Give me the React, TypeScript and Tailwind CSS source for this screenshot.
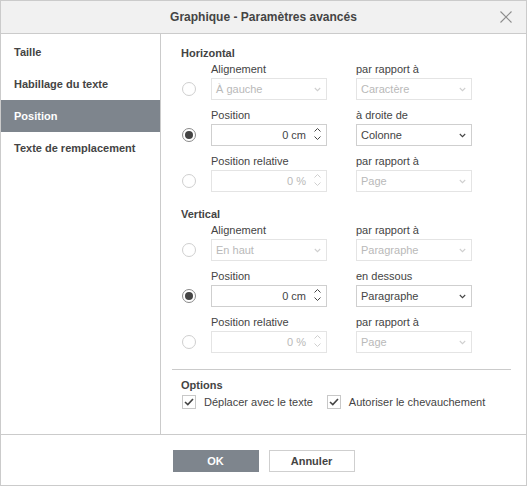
import React from 'react';

const FONT = 'font-["Liberation_Sans",Arial,Helvetica,sans-serif]';

const Chevron: React.FC<{ disabled?: boolean }> = ({ disabled }) => (
    <svg width="7" height="5" viewBox="0 0 7 5" className="absolute right-[5px] top-[8px]">
        <path d="M0.8 1 L3.5 3.7 L6.2 1" fill="none" stroke={disabled ? '#cfcfcf' : '#444'} strokeWidth="1.1" />
    </svg>
);

const Spinner: React.FC<{ disabled?: boolean }> = ({ disabled }) => (
    <div className="absolute right-[5px] top-[3px] flex flex-col gap-[4px]">
        <svg width="7" height="4" viewBox="0 0 7 4">
            <path d="M0.5 3.5 L3.5 0.5 L6.5 3.5" fill="none" stroke={disabled ? '#cfcfcf' : '#444'} strokeWidth="1" />
        </svg>
        <svg width="7" height="4" viewBox="0 0 7 4">
            <path d="M0.5 0.5 L3.5 3.5 L6.5 0.5" fill="none" stroke={disabled ? '#cfcfcf' : '#444'} strokeWidth="1" />
        </svg>
    </div>
);

const Select: React.FC<{ value: string; disabled?: boolean }> = ({ value, disabled }) => (
    <div className={`relative h-[22px] w-[116px] border ${disabled ? 'border-[#e4e4e4] text-[#b9b9b9]' : 'border-[#cfcfcf] text-[#444]'} bg-white pl-[4px] text-[11px] leading-[20px]`}>
        {value}
        <Chevron disabled={disabled} />
    </div>
);

const Spin: React.FC<{ value: string; disabled?: boolean }> = ({ value, disabled }) => (
    <div className={`relative h-[22px] w-[116px] border ${disabled ? 'border-[#e4e4e4] text-[#b9b9b9]' : 'border-[#cfcfcf] text-[#444]'} bg-white pr-[20px] text-right text-[11px] leading-[20px]`}>
        {value}
        <Spinner disabled={disabled} />
    </div>
);

const Radio: React.FC<{ checked?: boolean }> = ({ checked }) => (
    <div className="flex w-[30px] items-center">
        <div className={`ml-[1px] flex h-[14px] w-[14px] items-center justify-center rounded-full border ${checked ? 'border-[#8a8a8a]' : 'border-[#cfcfcf]'} bg-white`}>
            {checked && <div className="h-[8px] w-[8px] rounded-full bg-[#444]" />}
        </div>
    </div>
);

interface RowProps {
    checked?: boolean;
    label1: string;
    label2: string;
    field: React.ReactNode;
    select: React.ReactNode;
}

const Row: React.FC<RowProps> = ({ checked, label1, label2, field, select }) => (
    <div className="flex">
        <div className="flex flex-col">
            <div className="h-[14px]" />
            <div className="mt-[2px] flex h-[22px]">
                <Radio checked={checked} />
            </div>
        </div>
        <div className="flex w-[145px] flex-col">
            <div className="h-[14px] text-[11px] leading-[14px] text-[#444]">{label1}</div>
            <div className="mt-[2px]">{field}</div>
        </div>
        <div className="flex flex-col">
            <div className="h-[14px] text-[11px] leading-[14px] text-[#444]">{label2}</div>
            <div className="mt-[2px]">{select}</div>
        </div>
    </div>
);

const CheckBox: React.FC<{ label: string }> = ({ label }) => (
    <div className="flex h-[14px] items-center">
        <div className="flex h-[14px] w-[14px] items-center justify-center border border-[#c8c8c8] bg-white">
            <svg width="10" height="8" viewBox="0 0 10 8">
                <path d="M1 4 L3.8 6.6 L9 1" fill="none" stroke="#444" strokeWidth="1.6" />
            </svg>
        </div>
        <span className="ml-[8px] text-[11px] text-[#444]">{label}</span>
    </div>
);

const menu = ['Taille', 'Habillage du texte', 'Position', 'Texte de remplacement'];

export default function App() {
    return (
        <div className={`${FONT} flex h-[486px] w-[527px] flex-col border border-[#cbcbcb] bg-white`}>
            <div className="relative flex h-[33px] shrink-0 items-center justify-center border-b border-[#cbcbcb] bg-[#f1f1f1]">
                <span className="text-[12px] font-bold text-[#444]">Graphique - Paramètres avancés</span>
                <svg width="12" height="12" viewBox="0 0 12 12" className="absolute right-[14px] top-[10px]">
                    <path d="M0.5 0.5 L11.5 11.5 M11.5 0.5 L0.5 11.5" stroke="#8d8d8d" strokeWidth="1.1" />
                </svg>
            </div>

            <div className="flex h-[400px] shrink-0">
                <div className="w-[160px] shrink-0 border-r border-[#cbcbcb] pt-[2px]">
                    {menu.map((item) => (
                        <div key={item} className={`flex h-[32px] items-center pl-[13px] text-[11px] font-bold ${item === 'Position' ? 'bg-[#7e858d] text-white' : 'text-[#444]'}`}>
                            {item}
                        </div>
                    ))}
                </div>

                <div className="flex flex-1 flex-col pt-[12px]">
                    <div className="pl-[20px]">
                        <div className="h-[14px] text-[11px] font-bold leading-[14px] text-[#444]">Horizontal</div>
                        <div className="mt-[2px] flex flex-col gap-[8px]">
                            <Row label1="Alignement" label2="par rapport à" field={<Select value="À gauche" disabled />} select={<Select value="Caractère" disabled />} />
                            <Row checked label1="Position" label2="à droite de" field={<Spin value="0 cm" />} select={<Select value="Colonne" />} />
                            <Row label1="Position relative" label2="par rapport à" field={<Spin value="0 %" disabled />} select={<Select value="Page" disabled />} />
                        </div>

                        <div className="mt-[15px] h-[14px] text-[11px] font-bold leading-[14px] text-[#444]">Vertical</div>
                        <div className="mt-[2px] flex flex-col gap-[8px]">
                            <Row label1="Alignement" label2="par rapport à" field={<Select value="En haut" disabled />} select={<Select value="Paragraphe" disabled />} />
                            <Row checked label1="Position" label2="en dessous" field={<Spin value="0 cm" />} select={<Select value="Paragraphe" />} />
                            <Row label1="Position relative" label2="par rapport à" field={<Spin value="0 %" disabled />} select={<Select value="Page" disabled />} />
                        </div>
                    </div>

                    <div className="ml-[11px] mr-[15px] mt-[16px] border-t border-[#cbcbcb]" />

                    <div className="pl-[20px]">
                        <div className="mt-[8px] h-[14px] text-[11px] font-bold leading-[14px] text-[#444]">Options</div>
                        <div className="ml-[1px] mt-[3px] flex gap-[14px]">
                            <CheckBox label="Déplacer avec le texte" />
                            <CheckBox label="Autoriser le chevauchement" />
                        </div>
                    </div>
                </div>
            </div>

            <div className="flex flex-1 justify-center gap-[10px] border-t border-[#cbcbcb] pt-[15px]">
                <button className="h-[22px] w-[86px] bg-[#7e858d] text-[11px] font-bold text-white">OK</button>
                <button className="h-[22px] w-[86px] border border-[#cfcfcf] bg-white text-[11px] font-bold text-[#444]">Annuler</button>
            </div>
        </div>
    );
}
